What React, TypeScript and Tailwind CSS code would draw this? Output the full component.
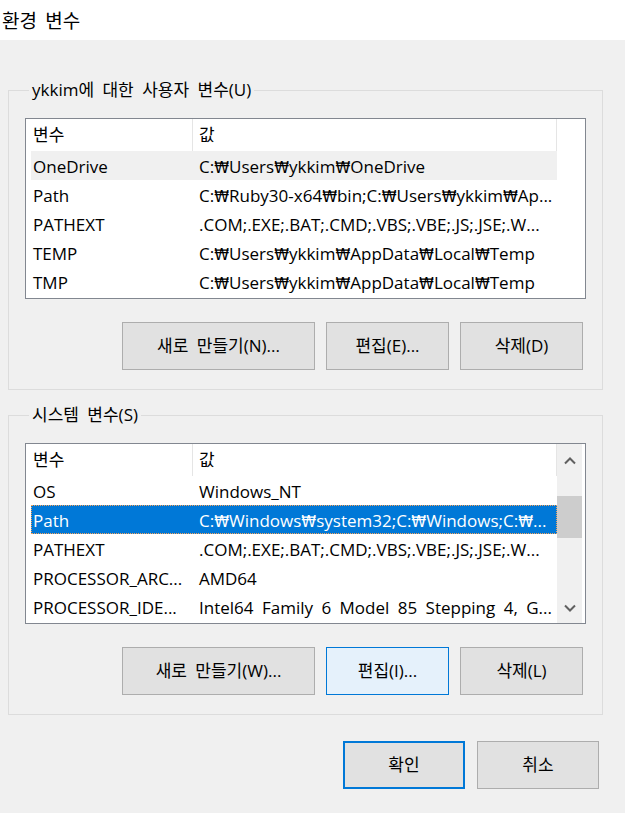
import { Fragment } from "react";

type Row = { name: string; value: string; state?: "hover" | "selected" };

const userRows: Row[] = [
  { name: "OneDrive", value: "C:₩Users₩ykkim₩OneDrive", state: "hover" },
  { name: "Path", value: "C:₩Ruby30-x64₩bin;C:₩Users₩ykkim₩Ap..." },
  { name: "PATHEXT", value: ".COM;.EXE;.BAT;.CMD;.VBS;.VBE;.JS;.JSE;.W..." },
  { name: "TEMP", value: "C:₩Users₩ykkim₩AppData₩Local₩Temp" },
  { name: "TMP", value: "C:₩Users₩ykkim₩AppData₩Local₩Temp" },
];

const systemRows: Row[] = [
  { name: "OS", value: "Windows_NT" },
  { name: "Path", value: "C:₩Windows₩system32;C:₩Windows;C:₩...", state: "selected" },
  { name: "PATHEXT", value: ".COM;.EXE;.BAT;.CMD;.VBS;.VBE;.JS;.JSE;.W..." },
  { name: "PROCESSOR_ARC...", value: "AMD64" },
  { name: "PROCESSOR_IDE...", value: "Intel64 Family 6 Model 85 Stepping 4, G..." },
];

// the won sign stands in for the backslash, as the Korean system font draws it
function PathText({ text }: { text: string }) {
  const parts = text.split("₩");
  return (
    <>
      {parts.map((p, i) => (
        <Fragment key={i}>
          {i > 0 && <span className="font-['DejaVu_Sans',sans-serif] text-[15px]">₩</span>}
          {p}
        </Fragment>
      ))}
    </>
  );
}

function ListView({ rows, scroll }: { rows: Row[]; scroll?: boolean }) {
  return (
    <div className="flex h-[181px] w-full overflow-hidden border border-[#828790] bg-white">
      <div className="flex w-[531px] flex-col pl-[5px]">
        {/* header */}
        <div className="grid h-[32px] shrink-0 grid-cols-[162px_364px]">
          <div className="flex items-center border-r border-[#e5e5e5] pl-[2px]">변수</div>
          <div className="flex items-center border-r border-[#e5e5e5] pl-[6px]">값</div>
        </div>
        {rows.map((r, i) => (
          <div
            key={i}
            className={
              "grid h-[29px] shrink-0 grid-cols-[162px_364px] items-center pt-[2px] " +
              (r.state === "hover"
                ? "bg-[#f0f0f0]"
                : r.state === "selected"
                ? "bg-[#0078d7] text-white outline-1 -outline-offset-1 outline-dotted outline-[#f6a35a]"
                : "")
            }
          >
            <div className="overflow-hidden whitespace-nowrap pl-[2px]">{r.name}</div>
            <div className="overflow-hidden whitespace-nowrap pl-[6px]">
              <PathText text={r.value} />
            </div>
          </div>
        ))}
      </div>
      {scroll && (
        <div className="flex w-[25px] flex-col bg-[#f0f0f0]">
          <div className="flex h-[33px] items-center justify-center">
            <svg width="12" height="8" viewBox="0 0 12 8" className="text-[#606060]">
              <polyline points="1,6.5 6,1.5 11,6.5" fill="none" stroke="currentColor" strokeWidth="2" />
            </svg>
          </div>
          <div className="flex flex-1 flex-col pt-[19px]">
            <div className="h-[42px] bg-[#cdcdcd]" />
          </div>
          <div className="flex h-[30px] items-center justify-center">
            <svg width="12" height="8" viewBox="0 0 12 8" className="text-[#606060]">
              <polyline points="1,1.5 6,6.5 11,1.5" fill="none" stroke="currentColor" strokeWidth="2" />
            </svg>
          </div>
        </div>
      )}
    </div>
  );
}

function Button({ label, w, variant }: { label: string; w: string; variant?: "hover" | "default" }) {
  const look =
    variant === "hover"
      ? "border border-[#0078d7] bg-[#e5f1fb]"
      : variant === "default"
      ? "border-2 border-[#0078d7] bg-[#e1e1e1]"
      : "border border-[#adadad] bg-[#e1e1e1]";
  return (
    <div className={`flex h-[48px] shrink-0 items-center justify-center ${w} ${look}`}>{label}</div>
  );
}

function Group({
  title,
  rows,
  scroll,
  buttons,
  className,
}: {
  title: string;
  rows: Row[];
  scroll?: boolean;
  buttons: string[];
  className?: string;
}) {
  return (
    <fieldset className={`ml-[8px] w-[595px] border border-[#dcdcdc] px-[16px] pb-[19px] pt-[16px] ${className ?? ""}`}>
      <legend className="ml-[4px] px-[3px] leading-[24px]">{title}</legend>
      <ListView rows={rows} scroll={scroll} />
      <div className="mt-[23px] flex justify-end gap-[11px] pr-[3px]">
        <Button label={buttons[0]} w="w-[193px]" />
        <Button label={buttons[1]} w="w-[123px]" variant={scroll ? "hover" : undefined} />
        <Button label={buttons[2]} w="w-[123px]" />
      </div>
    </fieldset>
  );
}

export default function App() {
  return (
    <div className="flex h-[813px] w-[625px] flex-col overflow-hidden bg-[#f0f0f0] font-['Open_Sans','Noto_Sans_CJK_KR',sans-serif] text-[17px] text-black [word-spacing:4px]">
      <div className="flex h-[40px] shrink-0 items-center bg-white pl-[2px] font-['Noto_Sans_CJK_KR',sans-serif] text-[19px]">
        환경 변수
      </div>

      <Group
        className="mt-[38px]"
        title="ykkim에 대한 사용자 변수(U)"
        rows={userRows}
        buttons={["새로 만들기(N)...", "편집(E)...", "삭제(D)"]}
      />
      <Group
        className="mt-[13px]"
        title="시스템 변수(S)"
        rows={systemRows}
        scroll
        buttons={["새로 만들기(W)...", "편집(I)...", "삭제(L)"]}
      />

      <div className="mt-[26px] flex justify-end gap-[12px] pr-[26px]">
        <Button label="확인" w="w-[122px]" variant="default" />
        <Button label="취소" w="w-[122px]" />
      </div>
    </div>
  );
}
